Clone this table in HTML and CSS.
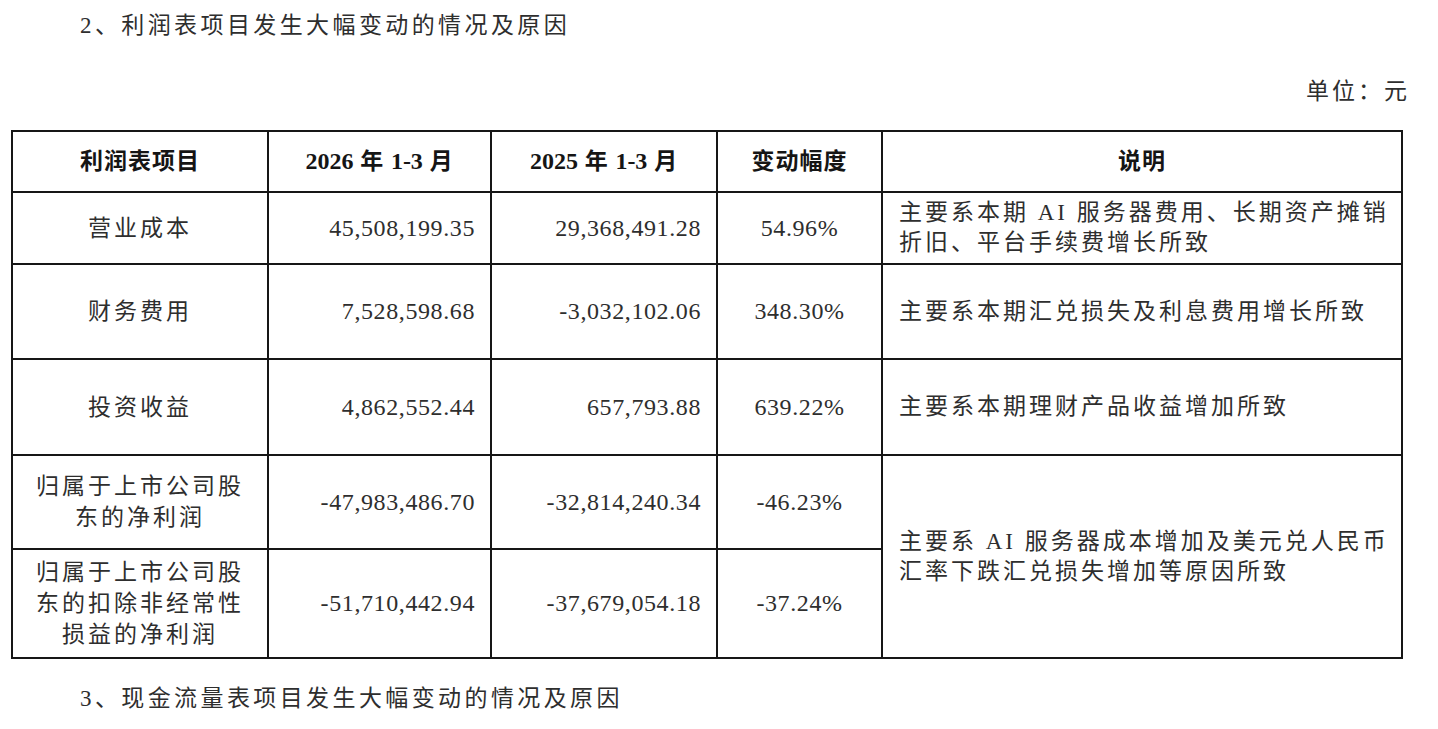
FILE: index.html
```html
<!DOCTYPE html>
<html lang="zh-CN">
<head>
<meta charset="utf-8">
<link rel="stylesheet" href="styles.css">
</head>
<body>
<div class="page">
  <p class="heading">2、利润表项目发生大幅变动的情况及原因</p>
  <p class="unit">单位：元</p>
  <table class="tbl">
    <colgroup>
      <col class="c1"><col class="c2"><col class="c3"><col class="c4"><col class="c5">
    </colgroup>
    <thead>
      <tr class="r-head">
        <th>利润表项目</th>
        <th><span class="num">2026</span> 年 <span class="num">1-3</span> 月</th>
        <th><span class="num">2025</span> 年 <span class="num">1-3</span> 月</th>
        <th>变动幅度</th>
        <th>说明</th>
      </tr>
    </thead>
    <tbody>
      <tr class="r1">
        <td class="name">营业成本</td>
        <td class="amt">45,508,199.35</td>
        <td class="amt">29,368,491.28</td>
        <td class="pct">54.96%</td>
        <td class="desc">主要系本期 AI 服务器费用、长期资产摊销折旧、平台手续费增长所致</td>
      </tr>
      <tr class="r2">
        <td class="name">财务费用</td>
        <td class="amt">7,528,598.68</td>
        <td class="amt">-3,032,102.06</td>
        <td class="pct">348.30%</td>
        <td class="desc">主要系本期汇兑损失及利息费用增长所致</td>
      </tr>
      <tr class="r3">
        <td class="name">投资收益</td>
        <td class="amt">4,862,552.44</td>
        <td class="amt">657,793.88</td>
        <td class="pct">639.22%</td>
        <td class="desc">主要系本期理财产品收益增加所致</td>
      </tr>
      <tr class="r4">
        <td class="name">归属于上市公司股东的净利润</td>
        <td class="amt">-47,983,486.70</td>
        <td class="amt">-32,814,240.34</td>
        <td class="pct">-46.23%</td>
        <td class="desc" rowspan="2">主要系 AI 服务器成本增加及美元兑人民币汇率下跌汇兑损失增加等原因所致</td>
      </tr>
      <tr class="r5">
        <td class="name">归属于上市公司股东的扣除非经常性损益的净利润</td>
        <td class="amt">-51,710,442.94</td>
        <td class="amt">-37,679,054.18</td>
        <td class="pct">-37.24%</td>
      </tr>
    </tbody>
  </table>
  <p class="heading bottom">3、现金流量表项目发生大幅变动的情况及原因</p>
</div>
</body>
</html>
```

FILE: styles.css
```css
html, body {
  margin: 0;
  padding: 0;
  background: #ffffff;
}

.page {
  padding: 10px 28px 0 11px;
  font-family: "Liberation Serif", "Noto Sans CJK SC", serif;
  color: #2e2e2e;
  font-size: 23px;
}

.heading {
  margin: 0;
  padding-left: 69px;
  line-height: 32px;
  letter-spacing: 3.4px;
}

.unit {
  margin: 34px 0 0 0;
  text-align: right;
  line-height: 32px;
  letter-spacing: 3px;
}

.tbl {
  margin-top: 22px;
  width: 1390px;
  border-collapse: collapse;
  table-layout: fixed;
}

.c1 { width: 256px; }
.c2 { width: 223px; }
.c3 { width: 226px; }
.c4 { width: 165px; }
.c5 { width: 520px; }

.tbl th,
.tbl td {
  border: 2px solid #161616;
  padding: 0;
  line-height: 31px;
}

.tbl th {
  font-weight: bold;
  color: #151515;
  text-align: center;
  letter-spacing: 1px;
}

.num {
  font-size: 24px;
  letter-spacing: 0;
}

.r-head { height: 61px; }
.r1 { height: 72px; }
.r2 { height: 95px; }
.r3 { height: 96px; }
.r4 { height: 94px; }
.r5 { height: 109px; }

.name {
  text-align: center;
  padding: 0 18px !important;
  letter-spacing: 3px;
}

.amt {
  text-align: right;
  padding-right: 15px !important;
  font-size: 24px;
  letter-spacing: 0.6px;
}

.pct {
  text-align: center;
  font-size: 24px;
  letter-spacing: 0.6px;
}

.desc {
  text-align: left;
  padding: 0 8px 0 16px !important;
  letter-spacing: 3px;
  line-height: 30px !important;
}

.bottom {
  margin-top: 24px;
}
```
